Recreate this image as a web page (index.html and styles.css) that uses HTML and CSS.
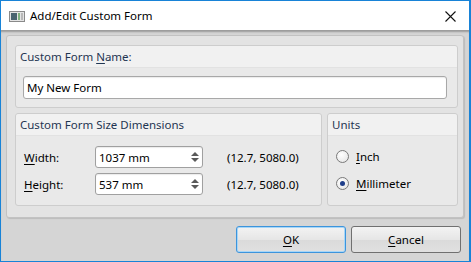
FILE: index.html
```html
<!DOCTYPE html>
<html lang="en">
<head>
    <meta charset="UTF-8">
    <title>Add/Edit Custom Form</title>
    <link rel="stylesheet" href="styles.css">
</head>
<body>

<div class="window">
    <div class="titlebar">
        <svg class="app-icon" width="16" height="11" viewBox="0 0 16 11">
            <rect x="0.5" y="0.5" width="15" height="10" fill="#e4e4e4" stroke="#8a8a8a"/>
            <rect x="2" y="2" width="6" height="7" fill="#4a6470"/>
            <rect x="9" y="2" width="2" height="7" fill="#7fb07f"/>
            <rect x="12" y="2" width="2" height="7" fill="#b8b8b8"/>
        </svg>
        <span class="title">Add/Edit Custom Form</span>
        <svg class="close" width="11" height="11" viewBox="0 0 11 11">
            <path d="M0.5 0.5 L10.5 10.5 M10.5 0.5 L0.5 10.5" stroke="#111" stroke-width="1.1"/>
        </svg>
    </div>

    <div class="client">
        <div class="panel">
            <div class="group">
                <div class="group-head">Custom Form <u>N</u>ame:</div>
                <div class="group-body name-body">
                    <div class="textbox">My New Form</div>
                </div>
            </div>

            <div class="row">
                <div class="group dims">
                    <div class="group-head">Custom Form Size Dimensions</div>
                    <div class="group-body dims-body">
                        <div class="dim-row">
                            <span class="dim-label"><u>W</u>idth:</span>
                            <div class="spin">
                                <span>1037 mm</span>
                                <span class="arrows"><i class="up"></i><i class="down"></i></span>
                            </div>
                            <span class="range">(12.7, 5080.0)</span>
                        </div>
                        <div class="dim-row">
                            <span class="dim-label"><u>H</u>eight:</span>
                            <div class="spin">
                                <span>537 mm</span>
                                <span class="arrows"><i class="up"></i><i class="down"></i></span>
                            </div>
                            <span class="range">(12.7, 5080.0)</span>
                        </div>
                    </div>
                </div>

                <div class="group units">
                    <div class="group-head">Units</div>
                    <div class="group-body units-body">
                        <label class="radio"><span class="dot"></span><u>I</u>nch</label>
                        <label class="radio"><span class="dot checked"></span><u>M</u>illimeter</label>
                    </div>
                </div>
            </div>
        </div>

        <div class="buttons">
            <button class="btn default"><u>O</u>K</button>
            <button class="btn"><u>C</u>ancel</button>
        </div>
    </div>
</div>

</body>
</html>
```

FILE: styles.css
```css
body {
    margin: 0;
    font-family: "Noto Sans", "Liberation Sans", sans-serif;
    font-size: 11.5px;
    color: #000;
}
u {
    text-decoration-thickness: 1px;
    text-underline-offset: 2px;
}
.window {
    width: 471px;
    height: 262px;
    box-sizing: border-box;
    border: 1px solid #1883d7;
    border-right-width: 2px;
    display: flex;
    flex-direction: column;
    background: #d3d3d3;
}
.titlebar {
    height: 29px;
    background: #fff;
    display: flex;
    align-items: center;
    padding-left: 8px;
    padding-right: 13px;
    flex-shrink: 0;
}
.app-icon {
    margin-right: 5px;
    margin-top: 1px;
}
.title {
    flex: 1;
    font-size: 11.5px;
}
.close {
    margin-top: 1px;
}
.client {
    flex: 1;
    display: flex;
    flex-direction: column;
    padding: 5px 5px 0 5px;
    box-shadow: inset 0 3px 2px -1px rgba(0, 0, 0, 0.28);
    background: #d5d5d5;
}
.panel {
    border: 1px solid #c2c2c2;
    border-radius: 3px;
    background: #e3e3e3;
    padding: 9px 5px 11px 8px;
    box-shadow: 1px 1px 1px rgba(0, 0, 0, 0.12);
    display: flex;
    flex-direction: column;
    gap: 5px;
}
.group {
    border: 1px solid #cdcdcd;
    border-radius: 3px;
    background: #e9e9e9;
    display: flex;
    flex-direction: column;
}
.group-head {
    height: 21px;
    line-height: 21px;
    padding-left: 4px;
    background: #f1f1f1;
    border-bottom: 1px solid #e2e2e2;
    border-radius: 3px 3px 0 0;
    color: #1f3552;
}
.name-body {
    padding: 8px 10px 8px 7px;
}
.textbox {
    height: 21px;
    line-height: 21px;
    border: 1px solid #a8a8a8;
    border-radius: 3px;
    background: #fff;
    padding-left: 3px;
    box-shadow: inset 0 1px 1px rgba(0, 0, 0, 0.08);
}
.row {
    display: flex;
    gap: 5px;
}
.dims {
    width: 305px;
}
.units {
    flex: 1;
}
.dims-body {
    padding: 10px 8px 10px 8px;
    display: flex;
    flex-direction: column;
    gap: 5px;
}
.dim-row {
    display: flex;
    align-items: center;
}
.dim-label {
    width: 71px;
}
.spin {
    width: 103px;
    height: 20px;
    border: 1px solid #a0a0a0;
    border-radius: 3px;
    background: #fff;
    display: flex;
    align-items: center;
    justify-content: space-between;
    padding-left: 3px;
    box-sizing: content-box;
    box-shadow: inset 0 1px 1px rgba(0, 0, 0, 0.08);
}
.arrows {
    display: flex;
    flex-direction: column;
    gap: 2px;
    margin-right: 3px;
}
.arrows i {
    width: 0;
    height: 0;
    border-left: 4px solid transparent;
    border-right: 4px solid transparent;
}
.arrows .up {
    border-bottom: 4px solid #5a5a5a;
}
.arrows .down {
    border-top: 4px solid #5a5a5a;
}
.range {
    margin-left: 24px;
}
.units-body {
    padding: 12px 8px 8px 8px;
    display: flex;
    flex-direction: column;
    gap: 11px;
}
.radio {
    display: flex;
    align-items: center;
    height: 16px;
}
.dot {
    width: 11px;
    height: 11px;
    border: 1px solid #7a7a7a;
    border-radius: 50%;
    background: radial-gradient(circle at 40% 35%, #fff, #e2e2e2);
    margin-right: 7px;
    display: flex;
    align-items: center;
    justify-content: center;
}
.dot.checked::after {
    content: "";
    width: 5px;
    height: 5px;
    border-radius: 50%;
    background: #1e3e8a;
}
.buttons {
    display: flex;
    justify-content: flex-end;
    gap: 5px;
    padding: 8px 3px 0 0;
}
.btn {
    width: 110px;
    height: 27px;
    font-family: inherit;
    font-size: 11.5px;
    color: #000;
    border: 1px solid #707070;
    border-radius: 3px;
    background: linear-gradient(#f3f3f3, #e6e6e6 50%, #dadada 51%, #e0e0e0);
    padding: 0;
}
.btn.default {
    border-color: #3c94dc;
    box-shadow: inset 0 0 0 1px #a7d6f7;
}
```
